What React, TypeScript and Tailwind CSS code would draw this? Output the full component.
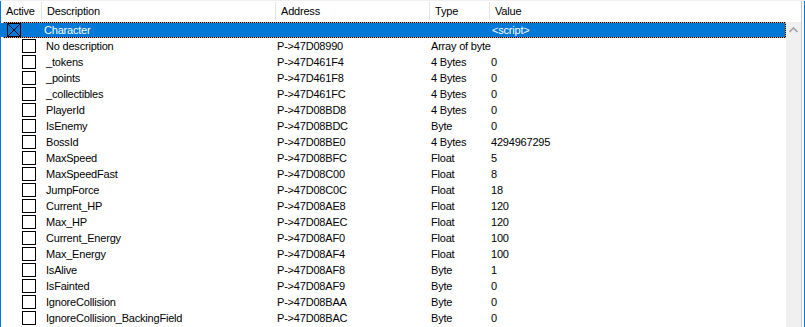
import React from 'react';

type Entry = { desc: string; addr: string; type: string; value: string };

const entries: Entry[] = [
  { desc: 'No description', addr: 'P->47D08990', type: 'Array of byte', value: '' },
  { desc: '_tokens', addr: 'P->47D461F4', type: '4 Bytes', value: '0' },
  { desc: '_points', addr: 'P->47D461F8', type: '4 Bytes', value: '0' },
  { desc: '_collectibles', addr: 'P->47D461FC', type: '4 Bytes', value: '0' },
  { desc: 'PlayerId', addr: 'P->47D08BD8', type: '4 Bytes', value: '0' },
  { desc: 'IsEnemy', addr: 'P->47D08BDC', type: 'Byte', value: '0' },
  { desc: 'BossId', addr: 'P->47D08BE0', type: '4 Bytes', value: '4294967295' },
  { desc: 'MaxSpeed', addr: 'P->47D08BFC', type: 'Float', value: '5' },
  { desc: 'MaxSpeedFast', addr: 'P->47D08C00', type: 'Float', value: '8' },
  { desc: 'JumpForce', addr: 'P->47D08C0C', type: 'Float', value: '18' },
  { desc: 'Current_HP', addr: 'P->47D08AE8', type: 'Float', value: '120' },
  { desc: 'Max_HP', addr: 'P->47D08AEC', type: 'Float', value: '120' },
  { desc: 'Current_Energy', addr: 'P->47D08AF0', type: 'Float', value: '100' },
  { desc: 'Max_Energy', addr: 'P->47D08AF4', type: 'Float', value: '100' },
  { desc: 'IsAlive', addr: 'P->47D08AF8', type: 'Byte', value: '1' },
  { desc: 'IsFainted', addr: 'P->47D08AF9', type: 'Byte', value: '0' },
  { desc: 'IgnoreCollision', addr: 'P->47D08BAA', type: 'Byte', value: '0' },
  { desc: 'IgnoreCollision_BackingField', addr: 'P->47D08BAC', type: 'Byte', value: '0' },
];

const cols = 'grid grid-cols-[41px_234px_154px_60px_1fr]';

const HeaderCell: React.FC<{ label: string; last?: boolean }> = ({ label, last }) => (
  <div className={`flex items-center h-full pl-[5px] ${last ? '' : 'border-r border-[#e5e5e5]'}`}>
    {label}
  </div>
);

const App: React.FC = () => {
  return (
    <div
      className="w-[805px] h-[327px] overflow-hidden bg-white border-t border-[#f0f0f0] flex text-black text-[11px] leading-none tracking-[-0.2px]"
      style={{ fontFamily: '"Liberation Sans", Arial, sans-serif' }}
    >
      <div className="w-px bg-[#0078d7]" />
      <div className="flex-1 flex flex-col min-w-0">
        {/* column headers */}
        <div className={`${cols} h-[21px] pt-px pb-[2px] mr-px`}>
          <HeaderCell label="Active" />
          <HeaderCell label="Description" />
          <HeaderCell label="Address" />
          <HeaderCell label="Type" />
          <HeaderCell label="Value" last />
        </div>
        <div className="flex flex-1 min-h-0">
          <div className="flex-1 flex flex-col pl-[2px]">
            {/* selected group row */}
            <div className="h-4 bg-black border border-dotted border-[#f59b3a]">
              <div className={`${cols} h-full bg-[#0078d7] text-white -ml-[3px]`}>
                <div className="flex items-center pl-[6px]">
                  <div className="w-[14px] h-[14px] border border-black">
                    <svg viewBox="0 0 12 12" className="w-full h-full">
                      <path d="M0 0 L12 12 M12 0 L0 12" stroke="black" strokeWidth="1" />
                    </svg>
                  </div>
                </div>
                <div className="flex items-center pl-[2px]">Character</div>
                <div />
                <div />
                <div className="flex items-center pl-[2px]">&lt;script&gt;</div>
              </div>
            </div>
            {entries.map((e) => (
              <div key={e.desc} className={`${cols} h-4 shrink-0 -ml-[2px]`}>
                <div className="flex items-center pl-[21px]">
                  <div className="w-[14px] h-[14px] border border-black bg-white" />
                </div>
                <div className="flex items-center pl-[4px] whitespace-nowrap">{e.desc}</div>
                <div className="flex items-center pl-px">{e.addr}</div>
                <div className="flex items-center pl-px whitespace-nowrap">{e.type}</div>
                <div className="flex items-center pl-px">{e.value}</div>
              </div>
            ))}
          </div>
          {/* vertical scrollbar */}
          <div className="w-[15px] bg-[#f0f0f0] flex justify-center pt-[5px]">
            <svg width="9" height="6" viewBox="0 0 9 6">
              <path d="M0.5 5 L4.5 1 L8.5 5" fill="none" stroke="#a3a3a3" strokeWidth="1.6" />
            </svg>
          </div>
        </div>
      </div>
      <div className="w-px bg-[#c8c8c8]" />
      <div className="w-[2px] bg-white" />
      <div className="w-px bg-[#0078d7]" />
    </div>
  );
};

export default App;
